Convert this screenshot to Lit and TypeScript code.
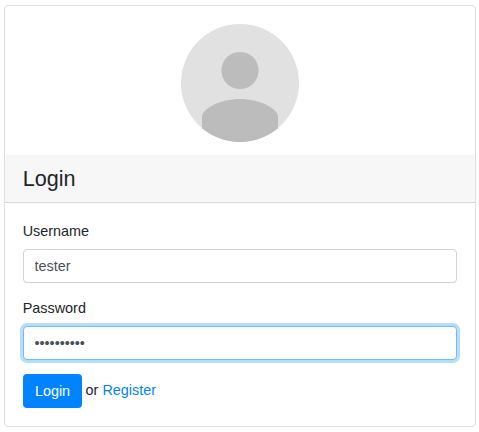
import { LitElement, html, css } from "lit";
import { customElement, state } from "lit/decorators.js";

@customElement("user-avatar")
export class UserAvatar extends LitElement {
  static styles = css`
    :host { display: block; width: 118px; height: 118px; }
    svg { display: block; }
  `;
  render() {
    return html`<svg width="118" height="118" viewBox="0 0 118 118" aria-label="Profile">
      <defs><clipPath id="disc"><circle cx="59" cy="59" r="59"></circle></clipPath></defs>
      <circle cx="59" cy="59" r="59" fill="#e1e1e1"></circle>
      <g fill="#bcbcbc" clip-path="url(#disc)">
        <circle cx="59" cy="46.5" r="18.6"></circle>
        <path d="M21 118V93C21 84.5 39.5 75 59 75S97 84.5 97 93V118Z"></path>
      </g>
    </svg>`;
  }
}

@customElement("app-root")
export class AppRoot extends LitElement {
  @state() private username = "tester";
  @state() private password = "0123456789";

  static styles = css`
    :host {
      display: block;
      box-sizing: border-box;
      height: 432px;
      padding: 5px 3px 5px 4px;
      background: #fff;
      color: #212529;
      font: 14.4px/21.6px "Liberation Sans", Arial, sans-serif;
    }
    * { box-sizing: border-box; }
    .card {
      height: 422px;
      border: 1px solid #dfdfdf;
      border-radius: 4px;
      background: #fff;
    }
    .picture { display: flex; justify-content: center; height: 149px; padding-top: 18px; }
    .title {
      height: 48px;
      margin: 0;
      padding: 11px 17.7px;
      border-bottom: 1px solid #d7d7d7;
      background: #f7f7f7;
      font-size: 21.6px;
      line-height: 26px;
      font-weight: 400;
    }
    .body { padding: 18px; }
    .field { display: flex; flex-direction: column; height: 77px; }
    .field + .field { height: 76px; }
    label { height: 28px; margin-left: -0.3px; line-height: 21px; }
    .control {
      width: 100%;
      height: 34px;
      padding: 0 10.5px;
      border: 1px solid #ced4da;
      border-radius: 4px;
      outline: none;
      background: #fff;
      color: #495057;
      font: inherit;
    }
    .active { border-color: #73bcfc; box-shadow: 0 0 0 3px #b8dcfb; }
    .actions { display: flex; gap: 3.6px; }
    .submit {
      width: 59px;
      height: 34px;
      padding: 2px 0 0;
      border: 0;
      border-radius: 4px;
      background: #0083ff;
      color: #fff;
      font: inherit;
    }
    .alternative { padding-top: 5px; line-height: 22px; }
    a { color: #0083ff; text-decoration: none; }
  `;

  render() {
    return html`
      <main class="card">
        <div class="picture"><user-avatar></user-avatar></div>
        <h1 class="title">Login</h1>
        <form class="body" @submit=${(e: Event) => e.preventDefault()}>
          <div class="field">
            <label for="username">Username</label>
            <input class="control" id="username" type="text" .value=${this.username} />
          </div>
          <div class="field">
            <label for="password">Password</label>
            <input class="control active" id="password" type="password" .value=${this.password} />
          </div>
          <div class="actions">
            <button class="submit" type="submit">Login</button>
            <span class="alternative">or <a href="#">Register</a></span>
          </div>
        </form>
      </main>
    `;
  }
}
